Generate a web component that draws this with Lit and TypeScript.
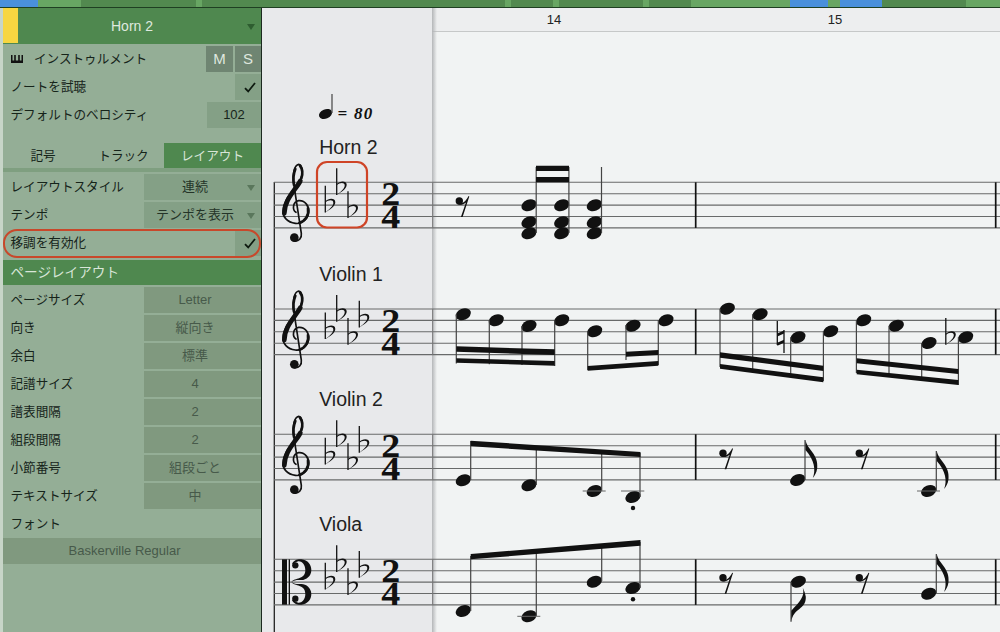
import { LitElement, html, css, svg } from "lit";
import { customElement } from "lit/decorators.js";

const SEGMENTS: [number, string][] = [
  [38, "blue"], [43, "light"], [115, "dark"], [6, "light"], [303, "dark"], [6, "light"], [42, "dark"], [6, "light"],
  [84, "dark"], [6, "light"], [42, "dark"], [99, "light"], [38, "blue"], [12, "light"], [42, "blue"], [84, "dark"], [34, "light"],
];

const PAGE_ROWS: [string, string][] = [
  ["ページサイズ", "Letter"], ["向き", "縦向き"], ["余白", "標準"], ["記譜サイズ", "4"],
  ["譜表間隔", "2"], ["組段間隔", "2"], ["小節番号", "組段ごと"], ["テキストサイズ", "中"],
];

const note = (x: number, y: number) =>
  svg`<ellipse class="nh" cx=${x} cy=${y} rx="7.9" ry="5.6" transform="rotate(-22 ${x} ${y})"></ellipse>`;
const stem = (x: number, y1: number, y2: number) => svg`<line class="stem" x1=${x} y1=${y1} x2=${x} y2=${y2}></line>`;
const beam = (x1: number, t1: number, b1: number, x2: number, t2: number, b2: number) =>
  svg`<polygon class="ink" points="${x1},${t1} ${x2},${t2} ${x2},${b2} ${x1},${b1}"></polygon>`;
const ledger = (x1: number, x2: number, y: number) => svg`<line class="ledger" x1=${x1} y1=${y} x2=${x2} y2=${y}></line>`;
const dot = (x: number, y: number) => svg`<circle class="ink" cx=${x} cy=${y} r="2.2"></circle>`;
const rest = (x: number, y: number) => svg`<g transform="translate(${x} ${y})">
  <circle class="ink" cx="0" cy="0" r="3.7"></circle>
  <path class="ink" d="M-2 2.6C2 3.4 6 1.5 9.2 -5L10 -4.6L3.3 16L1.6 16L6.6 1.4C3.6 4 0 4.6 -2 2.6Z"></path></g>`;
const flagUp = (x: number, y: number) => svg`<g transform="translate(${x} ${y})">
  <path class="ink" d="M0 0C1.7 10 13.300 14 11.700 28.300C11.100 32.900 9 36 7.300 38C10.500 30 9 20 0 10Z"></path></g>`;
const flagDown = (x: number, y: number) => svg`<g transform="translate(${x} ${y})">
  <path class="ink" d="M0 0C2 -14 15 -12 14.500 -25C14 -28 13 -31 11.500 -34C14 -25 8 -20 0 -11Z"></path></g>`;
const flat = (x: number, y: number) => svg`<g transform="translate(${x} ${y})">
  <line class="acc" x1="0" y1="0" x2="0" y2="26.700"></line>
  <path class="ink" d="M0 26.700C5 23 8 20 8 17C8 13.800 3 14 0 17L0 15.700C3 12.400 10 12 10 16.500C10 21 4 24 0 26.700Z"></path></g>`;
const natural = (x: number, y: number) => svg`<g transform="translate(${x} ${y})">
  <line class="acc" x1="0" y1="0" x2="0" y2="24"></line><line class="acc" x1="6.700" y1="9" x2="6.700" y2="32"></line>
  <polygon class="ink" points="0,12.500 6.700,9.500 6.700,12.500 0,15.500"></polygon><polygon class="ink" points="0,21.800 6.700,18.800 6.700,21.800 0,24.800"></polygon></g>`;

const treble = (top: number) => svg`<g transform="translate(272 ${top - 27.3}) scale(.3333)">
  <path class="cl thin" d="M72 172C60 165 62 140 80 137C100 135 112 155 110 172C108 195 85 208 70 205C45 202 32 185 33 168C35 130 70 100 85 75C95 55 90 28 80 28C68 30 60 55 65 85L88 235C90 250 80 260 67 258"></path>
  <path class="cl thick" d="M37 175C37 135 68 108 85 78"></path>
  <path class="cl mid" d="M70 42C63 60 63 75 66 90"></path>
  <path class="cl mid" d="M108 160C112 180 100 198 82 204"></path>
  <path class="cl mid" d="M88 70C93 55 90 40 84 32"></path>
  <circle class="ink" cx="67" cy="248" r="13"></circle></g>`;
const alto = (top: number) => svg`<g transform="translate(272 ${top - 9.3}) scale(.3333)">
  <rect class="ink" x="30" y="28" width="15" height="136"></rect><rect class="ink" x="50" y="28" width="4" height="136"></rect>
  <path class="ink" d="M60 42C65 30 78 27 88 28C108 30 118 45 118 60C118 80 100 92 85 90C76 89 68 90 58 96C68 82 100 90 100 60C100 42 88 33 79 34C70 36 66 42 60 42Z"></path>
  <path class="ink" d="M60 150C65 162 78 165 88 164C108 162 118 147 118 132C118 112 100 100 85 102C76 103 68 102 58 96C68 110 100 102 100 132C100 150 88 159 79 158C70 156 66 150 60 150Z"></path>
  <circle class="ink" cx="70" cy="46" r="9.500"></circle><circle class="ink" cx="70" cy="146" r="9.500"></circle></g>`;

const staff = (top: number, clef: unknown, flats: number) => {
  const offs = [3.4, -14, 9, -8.3];
  const xs = [325.3, 336.7, 348, 359.3];
  return svg`
    ${[0, 1, 2, 3, 4].map((i) => svg`<line class="sl" x1="274" y1=${top + i * 11.4} x2="1000" y2=${top + i * 11.4}></line>`)}
    <line class="gbar" x1="432.700" y1=${top} x2="432.700" y2=${top + 45.600}></line>
    <line class="bar" x1="695.700" y1=${top} x2="695.700" y2=${top + 45.600}></line>
    <line class="bar" x1="995.700" y1=${top} x2="995.700" y2=${top + 45.600}></line>
    ${clef}
    ${xs.slice(0, flats).map((x, i) => flat(x, top + offs[i]))}
    <text class="ts" x="390.700" y=${top + 22.700} textLength="19" lengthAdjust="spacingAndGlyphs">2</text>
    <text class="ts" x="390.700" y=${top + 45.800} textLength="19" lengthAdjust="spacingAndGlyphs">4</text>`;
};

const score = () => svg`
  <line class="sys" x1="274.300" y1="182" x2="274.300" y2="632"></line>

  <ellipse class="nh" cx="325.500" cy="114" rx="6.800" ry="4.700" transform="rotate(-22 325.500 114)"></ellipse>
  <line class="stem" x1="332" y1="94" x2="332" y2="113"></line>
  <text class="tempo" x="337.500" y="119.300">= 80</text>
  <text class="name" x="319.200" y="153.800">Horn 2</text>
  <text class="name" x="319.200" y="280.500">Violin 1</text>
  <text class="name" x="319.200" y="405.500">Violin 2</text>
  <text class="name" x="319.200" y="530.500">Viola</text>

  ${staff(182.3, treble(182.3), 3)}
  ${staff(309, treble(309), 4)}
  ${staff(434.3, treble(434.3), 4)}
  ${staff(559.3, alto(559.3), 4)}

  ${rest(459.3, 201)}
  ${[529, 561.7, 594.3].map((x) => svg`${note(x, 205.3)}${note(x, 222.3)}${note(x, 233.3)}${stem(x + 7.200, 167, 233)}`)}
  ${beam(536, 165.7, 171, 569, 165.7, 171)}${beam(536, 177, 182.3, 569, 177, 182.3)}

  ${[[463.3, 314.3], [496.3, 320.3], [529, 326], [561.7, 320.3]].map(([x, y], i) =>
    svg`${note(x, y)}${stem(x - 7, y, 363.500 + i * 0.8)}`)}
  ${beam(456.3, 346.3, 351.7, 554.7, 349.3, 355)}${beam(456.3, 358.3, 362.7, 554.7, 361, 365.7)}
  ${note(594.7, 331.3)}${stem(587.7, 331, 370)}
  ${note(633, 325.7)}${stem(626, 325, 360)}
  ${note(666, 320.3)}${stem(658.3, 320, 365)}
  ${beam(587.7, 366, 370.7, 658.3, 361, 365.7)}${beam(626, 351.7, 356.7, 658.3, 350, 355)}

  ${[[727.3, 308.7, 367], [760, 314.3, 370], [798, 337.3, 374], [830.7, 331.3, 381]].map(([x, y, e]) =>
    svg`${note(x, y)}${stem(x - 7.300, y, e)}`)}
  ${beam(720, 352.3, 357.7, 823.3, 365.7, 371)}${beam(720, 364, 368.7, 823.3, 377.3, 382.3)}
  ${[[863.7, 320.3, 373], [896.3, 325.7, 376], [929, 343, 379], [965.7, 337.3, 385]].map(([x, y, e]) =>
    svg`${note(x, y)}${stem(x - 7.300, y, e)}`)}
  ${beam(856.7, 358.3, 363.3, 958.3, 369, 374)}${beam(856.7, 369.7, 374.3, 958.3, 380, 385)}
  ${natural(777.3, 321)}${flat(945.8, 318)}

  ${note(463.3, 480.3)}${stem(470.7, 441, 480)}
  ${note(529, 485.3)}${stem(536.3, 446, 485)}
  ${note(594.3, 491)}${stem(601.7, 451, 491)}${ledger(582.7, 605.7, 491)}
  ${note(633, 497)}${stem(640, 453, 497)}${ledger(621, 644.3, 491)}${dot(633, 508)}
  ${beam(470.7, 440.7, 446.3, 640.500, 452, 457)}
  ${rest(723, 453.3)}${note(797.7, 480)}${stem(805, 440, 480)}${flagUp(805.500, 440)}
  ${rest(859.3, 453.3)}${note(928.7, 491)}${stem(936.3, 451, 491)}${flagUp(936.800, 451)}${ledger(917, 940, 491)}

  ${note(463.3, 611)}${stem(470.7, 556, 611)}
  ${note(529, 616.3)}${stem(536.3, 552, 616)}${ledger(517.3, 540.3, 616.3)}
  ${note(594.3, 581.7)}${stem(601.7, 546, 581)}
  ${note(633, 588)}${stem(640, 542, 588)}${dot(633, 599.3)}
  ${beam(470.7, 554, 559.3, 640.500, 540, 545.7)}
  ${rest(723, 577.7)}${note(798.3, 581.7)}${stem(791, 582, 621.7)}${flagDown(791.300, 621.700)}
  ${rest(859.3, 577.7)}${note(928.7, 593.7)}${stem(936.3, 554, 593)}${flagUp(936.800, 554)}

  <rect class="mark" x="317" y="162" width="50" height="65.500" rx="10"></rect>`;

const check = html`<svg class="check" viewBox="0 0 12 11"><path d="M1 6.200L4.200 9.500L11 1"></path></svg>`;
const tri = html`<span class="tri"></span>`;

@customElement("app-root")
export class AppRoot extends LitElement {
  static styles = css`
    :host { display: block; width: 1000px; height: 632px; overflow: hidden; font-family: "Liberation Sans", "Noto Sans CJK JP", sans-serif; font-size: 12.6px; line-height: 16px; color: #16241a; }
    .app { display: flex; flex-direction: column; height: 632px; }
    .strip { display: flex; height: 8px; flex: none; box-sizing: border-box; border-bottom: 1px solid #1f3f22; }
    .blue { background: #4a90dc; } .light { background: #68a663; } .dark { background: #52894f; }
    .body { display: flex; flex: 1; min-height: 0; }

    .side { flex: none; width: 262px; box-sizing: border-box; background: #94ae96; border-left: 3px solid #c7d5c8; border-right: 1px solid #1c2a20; display: flex; flex-direction: column; }
    .head { flex: none; height: 36px; display: flex; background: #4f884f; position: relative; align-items: center; justify-content: center; color: #dfe9df; font-size: 14px; padding-bottom: 1px; box-sizing: border-box; }
    .yellow { position: absolute; left: 0; top: 0; width: 15px; height: 35px; background: #f7d641; }
    .head .tri { position: absolute; right: 6px; top: 15.500px; border-top-color: #2e5d30; }
    .tri { width: 0; height: 0; border-left: 4.500px solid transparent; border-right: 4.500px solid transparent; border-top: 6px solid #5a775c; }

    .row { height: 28px; flex: none; display: flex; align-items: center; justify-content: space-between; padding-left: 7.500px; position: relative; box-sizing: border-box; }
    .lb { display: block; padding-bottom: 1px; }
    .inst { display: flex; align-items: center; gap: 11px; padding-left: .5px; }
    .piano { width: 12px; height: 8px; display: block; }
    .cell { height: 25.500px; display: flex; align-items: center; justify-content: center; background: #84a086; box-sizing: border-box; position: relative; font-size: 13px; }
    .chk { width: 26px; padding-left: 3px; }
    .check { width: 12px; height: 11px; fill: none; stroke: #0e1a10; stroke-width: 1.800; }
    .ms { display: flex; gap: 2px; }
    .ms .cell { width: 27px; background: #6f8572; color: #dfe7df; font-size: 15px; }
    .ms .cell + .cell { width: 26px; }
    .vel { width: 54px; }
    .sel { width: 117px; padding-right: 15px; color: #243428; }
    .sel .tri { position: absolute; right: 6px; top: 11px; }
    .off { background: #80997f; color: #475a4a; }
    .spacer { height: 14px; flex: none; }
    .first { height: 29px; padding-top: 1px; }

    .tabs { display: flex; height: 25px; flex: none; align-items: center; }
    .tab { display: flex; height: 25px; align-items: center; justify-content: center; }
    .t1 { width: 80px; } .t2 { width: 81px; }
    .t3 { width: 97px; background: #4f884f; color: #d8e5d8; }
    .rule { height: 4px; background: #7f9f80; flex: none; margin-bottom: 1px; }

    .ring::after { content: ""; position: absolute; left: 0; right: 0; top: 0; bottom: -1px; box-sizing: border-box; border: 2.500px solid #c8482b; border-radius: 14px; }
    .section { flex: none; height: 25px; margin-top: 3px; margin-bottom: 1px; background: #4f884f; color: #d8e5d8; display: flex; align-items: center; padding-left: 7.500px; font-size: 13.600px; }
    .wide { height: 25.500px; flex: none; padding-right: 15px; }

    .score { flex: 1; position: relative; display: flex; min-width: 0; background: #f1f3f3; }
    .gutter { flex: none; width: 170px; background: #e8e9eb; }
    .right { flex: 1; display: flex; flex-direction: column; position: relative; }
    .right::before { content: ""; position: absolute; left: 0; top: 0; bottom: 0; width: 5px; background: linear-gradient(to right, #b4b6b8, rgba(180,182,184,0)); }
    .ruler { height: 24px; flex: none; background: #edeeef; border-bottom: 1px solid #c6c8c8; box-sizing: border-box; display: flex; align-items: center; gap: 251px; padding-left: 107px; font-size: 13px; color: #222; }
    .ruler span { width: 30px; text-align: center; }
    .canvas { position: absolute; inset: 0; width: 738px; height: 624px; display: block; }

    .ink, .nh { fill: #111; }
    .sl { stroke: #686a6a; stroke-width: 1.100; }
    .stem { stroke: #444; stroke-width: 1.200; }
    .ledger { stroke: #666; stroke-width: 1; }
    .bar { stroke: #111; stroke-width: 1.700; }
    .gbar { stroke: #777; stroke-width: 1; }
    .sys { stroke: #222; stroke-width: 1.300; }
    .acc { stroke: #111; stroke-width: 1.300; }
    .cl { fill: none; stroke: #111; stroke-linecap: round; }
    .thin { stroke-width: 5px; } .thick { stroke-width: 14px; } .mid { stroke-width: 8px; }
    .ts { font-family: "Liberation Serif", serif; font-weight: 700; font-size: 33px; text-anchor: middle; fill: #111; }
    .tempo { font-family: "Liberation Serif", serif; font-weight: 700; font-style: italic; font-size: 17px; letter-spacing: 1.300px; fill: #111; }
    .name { font-family: "Liberation Sans", sans-serif; font-size: 19.500px; fill: #222; }
    .mark { fill: none; stroke: #cf4426; stroke-width: 2.200; }
  `;

  render() {
    const lb = (t: string) => html`<span class="lb">${t}</span>`;
    return html`<div class="app">
      <div class="strip">${SEGMENTS.map(([w, c]) => html`<div class=${c} style="width:${w}px"></div>`)}</div>
      <div class="body">
        <div class="side">
          <div class="head"><div class="yellow"></div>Horn 2${tri}</div>
          <div class="row first">
            <div class="inst"><svg class="piano" viewBox="0 0 12 8"><path d="M0 0h1.500v5.500h1.700V0h1.600v5.500h2.400V0h1.600v5.500h1.700V0H12v8H0z" fill="#111"></path></svg>${lb("インストゥルメント")}</div>
            <div class="ms"><div class="cell">M</div><div class="cell">S</div></div>
          </div>
          <div class="row">${lb("ノートを試聴")}<div class="cell chk">${check}</div></div>
          <div class="row">${lb("デフォルトのベロシティ")}<div class="cell vel">102</div></div>
          <div class="spacer"></div>
          <div class="tabs"><div class="tab t1">記号</div><div class="tab t2">トラック</div><div class="tab t3">レイアウト</div></div>
          <div class="rule"></div>
          <div class="row">${lb("レイアウトスタイル")}<div class="cell sel">連続${tri}</div></div>
          <div class="row">${lb("テンポ")}<div class="cell sel">テンポを表示${tri}</div></div>
          <div class="row ring">${lb("移調を有効化")}<div class="cell chk">${check}</div></div>
          <div class="section">ページレイアウト</div>
          ${PAGE_ROWS.map(([k, v]) => html`<div class="row">${lb(k)}<div class="cell sel off">${v}</div></div>`)}
          <div class="row">${lb("フォント")}</div>
          <div class="cell wide off">Baskerville Regular</div>
        </div>
        <div class="score">
          <div class="gutter"></div>
          <div class="right"><div class="ruler"><span>14</span><span>15</span></div></div>
          <svg class="canvas" viewBox="262 8 738 624">${score()}</svg>
        </div>
      </div>
    </div>`;
  }
}
